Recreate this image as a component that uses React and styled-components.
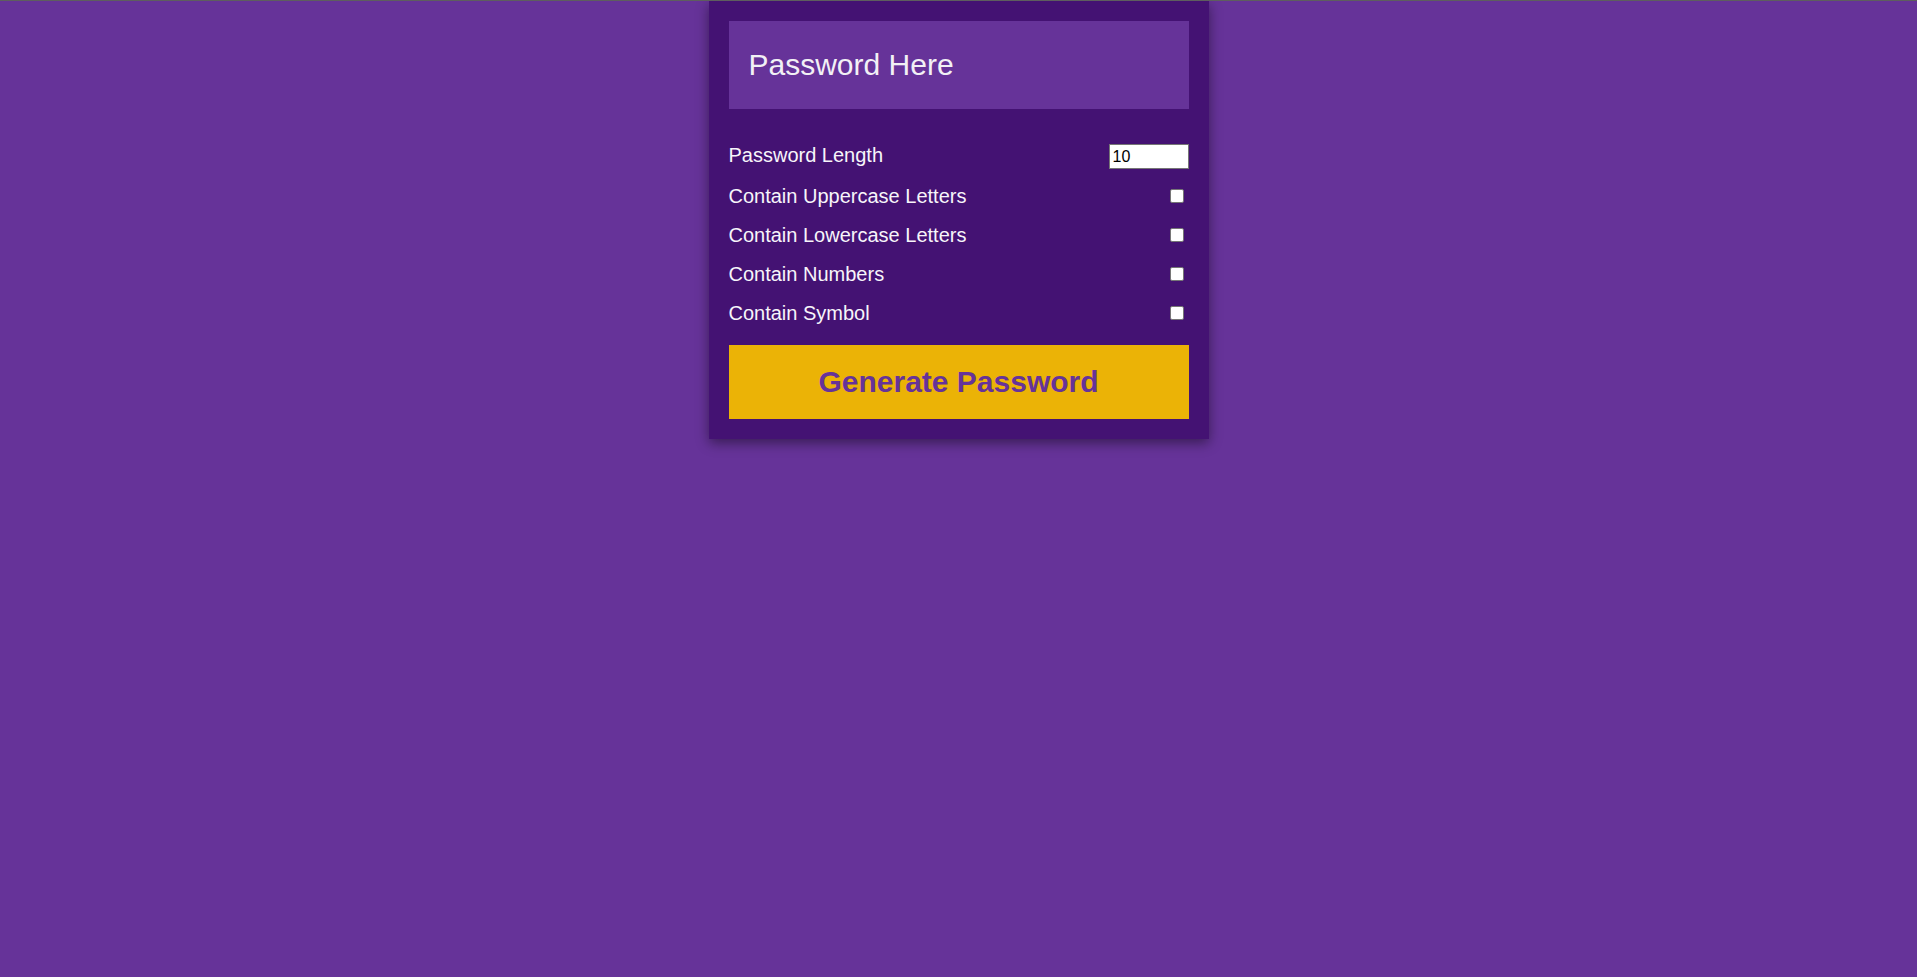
import React, {useState} from "react";
import styled, {createGlobalStyle} from "styled-components";

const GlobalStyle = createGlobalStyle`
  html, body {
    margin: 0;
    padding: 0;
    min-height: 100%;
  }

  body {
    background: #663399;
    border-top: 1px solid #5e5e5e;
    min-height: 976px;
    font-family: "Liberation Sans", Arial, sans-serif;
  }
`

const Card = styled.div`
  width: 500px;
  box-sizing: border-box;
  margin: 0 auto;
  padding: 20px;
  background: #441273;
  box-shadow: 0 4px 12px rgba(0, 0, 0, 0.45);
`

const Result = styled.div`
  height: 88px;
  display: flex;
  align-items: center;
  padding: 0 20px;
  background: #663399;
  color: #f2f0f5;
  font-size: 30px;
  margin-bottom: 35px;
`

const Options = styled.div`
  display: flex;
  flex-direction: column;
  gap: 15px;
  margin-bottom: 20px;
`

const Row = styled.label`
  display: flex;
  justify-content: space-between;
  align-items: ${props => props.top ? 'flex-start' : 'center'};
  min-height: 24px;
  color: #f7f5fa;
  font-size: 20px;
  line-height: 23px;
`

const LengthInput = styled.input`
  box-sizing: border-box;
  width: 80px;
  height: 25px;
  margin: 0;
  padding: 1px 3px;
  border: 1px solid #767676;
  font-family: "Liberation Sans", Arial, sans-serif;
  font-size: 16px;
  color: #000;
  background: #fff;
`

const Check = styled.input`
  appearance: none;
  box-sizing: border-box;
  width: 14px;
  height: 14px;
  margin: 0 5px 0 0;
  border: 1px solid #767676;
  border-radius: 2px;
  background: #fff;
`

const GenerateButton = styled.button`
  display: block;
  width: 100%;
  height: 74px;
  border: none;
  background: #ebb306;
  color: #663399;
  font-family: "Liberation Sans", Arial, sans-serif;
  font-weight: bold;
  font-size: 30px;
  cursor: pointer;
`

const options = [
    'Contain Uppercase Letters',
    'Contain Lowercase Letters',
    'Contain Numbers',
    'Contain Symbol',
]

export default function App() {
    const [length, setLength] = useState(10);

    return (
        <React.Fragment>
            <GlobalStyle/>
            <Card>
                <Result>Password Here</Result>
                <Options>
                    <Row top>
                        Password Length
                        <LengthInput type="number" value={length}
                                     onChange={e => setLength(e.target.value)}/>
                    </Row>
                    {options.map(it => (
                        <Row key={it}>
                            {it}
                            <Check type="checkbox"/>
                        </Row>
                    ))}
                </Options>
                <GenerateButton>Generate Password</GenerateButton>
            </Card>
        </React.Fragment>
    )
}
